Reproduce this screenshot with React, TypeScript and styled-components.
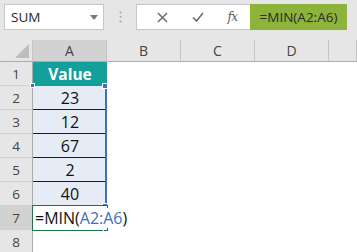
import React from "react";
import styled, { createGlobalStyle, css } from "styled-components";

const GlobalStyle = createGlobalStyle`
  html, body {
    margin: 0;
    padding: 0;
    background: #ffffff;
  }
  body {
    font-family: "Open Sans", "Liberation Sans", sans-serif;
  }
`;

const Window = styled.div`
  width: 357px;
  height: 252px;
  overflow: hidden;
  background: #ffffff;
`;

const FormulaBar = styled.div`
  height: 40px;
  box-sizing: border-box;
  background: #e6e6e6;
  display: flex;
  align-items: flex-start;
  padding: 4px 0 0 4px;
`;

const NameBox = styled.div`
  width: 100px;
  height: 26px;
  box-sizing: border-box;
  background: #fff;
  border: 1px solid #c6c6c6;
  display: flex;
  align-items: center;
  justify-content: space-between;
  padding: 0 5px 0 6px;
  font-size: 13.5px;
  color: #262626;
`;

const Grip = styled.div`
  width: 32px;
  height: 26px;
  display: flex;
  align-items: center;
  justify-content: center;
`;

const ButtonsBox = styled.div`
  width: 114px;
  height: 26px;
  box-sizing: border-box;
  background: #fff;
  border: 1px solid #c6c6c6;
  border-right: none;
  display: flex;
  align-items: center;
  padding-left: 8px;
`;

const BarButton = styled.div`
  width: 36px;
  height: 24px;
  display: flex;
  align-items: center;
  justify-content: center;
  color: #6b6b6b;
`;

const FxLabel = styled.span`
  font-family: "DejaVu Serif", "Liberation Serif", serif;
  font-style: italic;
  font-size: 12px;
  color: #5a5a5a;
  letter-spacing: -0.5px;
`;

const FormulaInput = styled.div`
  width: 97px;
  height: 26px;
  box-sizing: border-box;
  background: #8db33a;
  display: flex;
  align-items: center;
  justify-content: center;
  font-size: 13.5px;
  color: #2b2b2b;
  white-space: nowrap;
`;

const Sheet = styled.div`
  position: relative;
  display: grid;
  grid-template-columns: 33px repeat(4, 74px) 1fr;
  grid-template-rows: 22px repeat(8, 24px);
`;

const headerBase = css`
  box-sizing: border-box;
  display: flex;
  align-items: center;
  justify-content: center;
  color: #444;
`;

const Corner = styled.div`
  ${headerBase};
  background: #e6e6e6;
  border-right: 1px solid #c4c4c4;
  border-bottom: 1px solid #ababab;
  align-items: flex-end;
  justify-content: flex-end;
  padding: 0 3px 3px 0;
`;

const ColHeader = styled.div<{ $active?: boolean }>`
  ${headerBase};
  font-size: 14px;
  background: ${(p) => (p.$active ? "#d2d2d2" : "#e6e6e6")};
  border-right: 1px solid #c4c4c4;
  border-bottom: 1px solid #ababab;
`;

const RowHeader = styled.div<{ $active?: boolean }>`
  ${headerBase};
  font-size: 13.5px;
  background: ${(p) => (p.$active ? "#d2d2d2" : "#e6e6e6")};
  border-right: 1px solid #ababab;
  border-bottom: 1px solid #d0d0d0;
`;

const Cell = styled.div<{ $tone?: "title" | "data" | "plain"; $rule?: boolean }>`
  box-sizing: border-box;
  display: flex;
  align-items: center;
  justify-content: center;
  font-size: 16px;
  color: #111;
  background: ${(p) =>
    p.$tone === "title" ? "#13a09a" : p.$tone === "data" ? "#e6ecf6" : "#fff"};
  ${(p) =>
    p.$tone === "title" &&
    css`
      color: #fff;
      font-weight: 700;
      font-size: 15.5px;
    `}
  ${(p) => p.$rule && "border-bottom: 1px solid #1a1a1a;"}
`;

const FormulaCell = styled(Cell)`
  position: relative;
  justify-content: flex-start;
  padding-left: 2px;
  white-space: nowrap;
  overflow: visible;
  z-index: 3;
`;

const EditText = styled.span`
  background: #fff;
  padding-right: 1px;
  line-height: 20px;
`;

const Ref = styled.span`
  color: #3c6fc4;
`;

const Caret = styled.span`
  display: inline-block;
  width: 1px;
  height: 17px;
  background: #000;
  margin-left: 2px;
  vertical-align: middle;
`;

const RangeMarker = styled.div`
  position: absolute;
  left: 33px;
  top: 46px;
  width: 74px;
  height: 120px;
  box-sizing: border-box;
  border-right: 2px solid #3c6fc4;
  pointer-events: none;
`;

const Handle = styled.span<{ $x: "l" | "r"; $y: "t" | "b"; $size: number; $color: string }>`
  position: absolute;
  width: ${(p) => p.$size}px;
  height: ${(p) => p.$size}px;
  background: ${(p) => p.$color};
  border: 1px solid #fff;
  ${(p) => (p.$x === "l" ? "left" : "right")}: ${(p) => -Math.ceil(p.$size / 2) - 1}px;
  ${(p) => (p.$y === "t" ? "top" : "bottom")}: ${(p) => -Math.ceil(p.$size / 2) - 1}px;
`;

const ActiveBorder = styled.div`
  position: absolute;
  left: 32px;
  top: 165px;
  width: 76px;
  height: 26px;
  box-sizing: border-box;
  border: 2px solid #217346;
  pointer-events: none;
  z-index: 2;
`;

const values = [23, 12, 67, 2, 40];

export default function App() {
  return (
    <Window>
      <GlobalStyle />
      <FormulaBar>
        <NameBox>
          <span>SUM</span>
          <svg width="8" height="5" viewBox="0 0 8 5">
            <path d="M0 0h8L4 5z" fill="#777" />
          </svg>
        </NameBox>
        <Grip>
          <svg width="3" height="12" viewBox="0 0 3 12">
            <circle cx="1.5" cy="1.5" r="1" fill="#a6a6a6" />
            <circle cx="1.5" cy="6" r="1" fill="#a6a6a6" />
            <circle cx="1.5" cy="10.5" r="1" fill="#a6a6a6" />
          </svg>
        </Grip>
        <ButtonsBox>
          <BarButton>
            <svg width="11" height="11" viewBox="0 0 11 11">
              <path d="M1 1l9 9M10 1l-9 9" stroke="#6b6b6b" strokeWidth="1.5" />
            </svg>
          </BarButton>
          <BarButton>
            <svg width="12" height="10" viewBox="0 0 12 10">
              <path d="M1 5.5l3.5 3.5L11 1" stroke="#6b6b6b" strokeWidth="1.6" fill="none" />
            </svg>
          </BarButton>
          <BarButton>
            <FxLabel>fx</FxLabel>
          </BarButton>
        </ButtonsBox>
        <FormulaInput>=MIN(A2:A6)</FormulaInput>
      </FormulaBar>

      <Sheet>
        <Corner>
          <svg width="14" height="14" viewBox="0 0 14 14">
            <path d="M14 0v14H0z" fill="#bdbdbd" />
          </svg>
        </Corner>
        <ColHeader $active>A</ColHeader>
        <ColHeader>B</ColHeader>
        <ColHeader>C</ColHeader>
        <ColHeader>D</ColHeader>
        <ColHeader />

        <RowHeader>1</RowHeader>
        <Cell $tone="title">Value</Cell>
        <Cell />
        <Cell />
        <Cell />
        <Cell />

        {values.map((v, i) => (
          <React.Fragment key={i}>
            <RowHeader>{i + 2}</RowHeader>
            <Cell $tone="data" $rule={i < values.length - 1}>
              {v}
            </Cell>
            <Cell />
            <Cell />
            <Cell />
            <Cell />
          </React.Fragment>
        ))}

        <RowHeader $active>7</RowHeader>
        <FormulaCell>
          <EditText>
            =MIN(<Ref>A2:A6</Ref>)
          </EditText>
          <Caret />
        </FormulaCell>
        <Cell />
        <Cell />
        <Cell />
        <Cell />

        <RowHeader>8</RowHeader>
        <Cell />
        <Cell />
        <Cell />
        <Cell />
        <Cell />

        <RangeMarker>
          <Handle $x="l" $y="t" $size={3} $color="#3c6fc4" />
          <Handle $x="r" $y="t" $size={4} $color="#3c6fc4" />
          <Handle $x="r" $y="b" $size={4} $color="#3c6fc4" />
        </RangeMarker>
        <ActiveBorder>
          <Handle $x="r" $y="b" $size={4} $color="#217346" />
        </ActiveBorder>
      </Sheet>
    </Window>
  );
}
